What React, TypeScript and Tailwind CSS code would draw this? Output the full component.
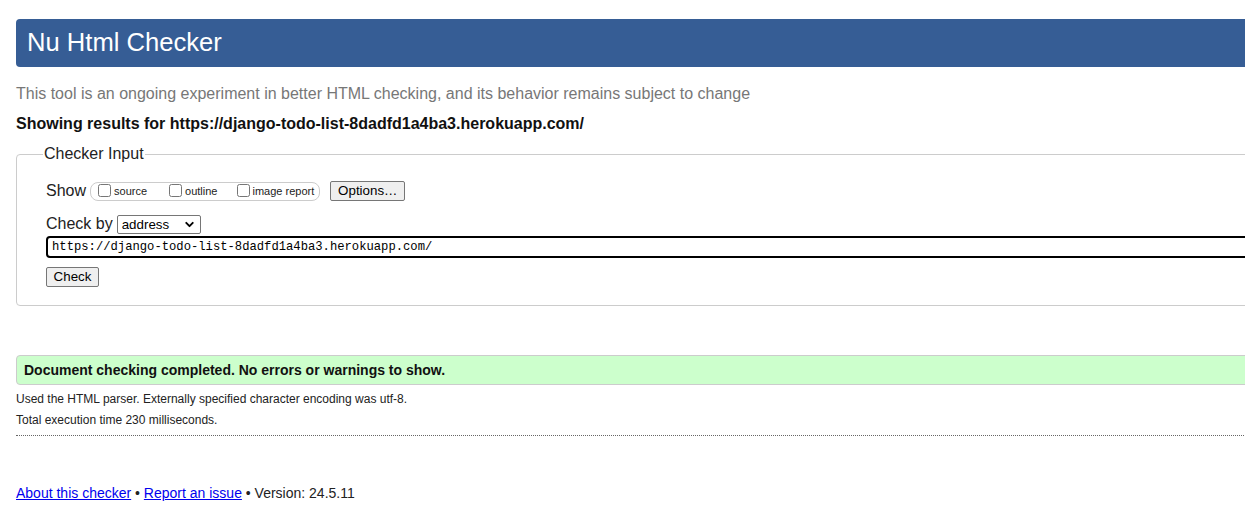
import { ChevronDown } from 'lucide-react';

const url = 'https://django-todo-list-8dadfd1a4ba3.herokuapp.com/';

function ShowOptions() {
  return (
    <span className="ml-[4px] flex h-[19px] items-center rounded-[8px] border border-[#cccccc] pl-[7px] pr-[5px] text-[11px] text-[#222]">
      <input type="checkbox" className="h-[13px] w-[13px] -translate-y-[1px]" />
      <span className="ml-[3px]">source</span>
      <input type="checkbox" className="ml-[22px] h-[13px] w-[13px] -translate-y-[1px]" />
      <span className="ml-[3px]">outline</span>
      <input type="checkbox" className="ml-[20px] h-[13px] w-[13px] -translate-y-[1px]" />
      <span className="ml-[2px]">image report</span>
    </span>
  );
}

function NativeButton({ label, className }: { label: string; className?: string }) {
  return (
    <button
      className={`h-[20px] rounded-[2px] border border-[#767676] bg-[#efefef] text-[13.33px] leading-[18px] text-black ${className ?? ''}`}
    >
      {label}
    </button>
  );
}

export default function App() {
  return (
    <div className="h-[518px] w-[1245px] overflow-hidden bg-white font-['Liberation_Sans',Arial,sans-serif] text-black">
      <div className="w-[1300px] pl-4 pt-[19px]">
        <h1 className="h-[48px] rounded-l-[4px] bg-[#365d95] pl-[11px] text-[25.6px] leading-[46px] text-white">
          Nu Html Checker
        </h1>

        <p className="mt-[17px] text-[16px] leading-[20px] text-[#777777]">
          This tool is an ongoing experiment in better HTML checking, and its behavior remains subject to change
        </p>
        <p className="mt-[10px] text-[16px] font-bold leading-[20px] text-[#111]">
          Showing results for {url}
        </p>

        <fieldset className="mt-[10px] rounded-[4px] border border-[#cccccc] pb-[17px] pl-[29px]">
          <legend className="-ml-[3px] px-[1px] text-[16px] leading-[20px] text-[#222]">Checker Input</legend>

          <div className="mt-[17px] flex h-[20px] items-center">
            <span className="text-[16px] leading-[20px] text-[#222]">Show</span>
            <ShowOptions />
            <NativeButton label="Options…" className="ml-[10px] w-[75px]" />
          </div>

          <div className="mt-[13px] flex h-[20px] items-center">
            <span className="text-[16px] leading-[20px] text-[#222]">Check by</span>
            <span className="relative ml-[4px] flex h-[19px] w-[84px] items-center rounded-[2px] border border-[#767676] bg-white pl-[4px] text-[13.33px] leading-[17px]">
              address
              <ChevronDown size={13} strokeWidth={3.5} className="absolute right-[4px] top-[2px]" />
            </span>
          </div>

          <div className="mt-[2px] flex h-[22px] items-center rounded-[4px] border-2 border-black pl-[4px] font-['Liberation_Mono','DejaVu_Sans_Mono',monospace] text-[12.2px]">
            {url}
          </div>

          <NativeButton label="Check" className="mt-[9px] w-[53px]" />
        </fieldset>

        <div className="mt-[49px] flex h-[30px] items-center rounded-l-[4px] border border-[#cccccc] bg-[#ccffcc] pl-[7px] text-[14px] font-bold text-[#111]">
          Document checking completed. No errors or warnings to show.
        </div>

        <p className="mt-[6px] text-[12px] leading-[16px] text-[#222]">
          Used the HTML parser. Externally specified character encoding was utf-8.
        </p>
        <p className="mt-[5px] text-[12px] leading-[16px] text-[#222]">Total execution time 230 milliseconds.</p>

        <div className="mt-[7px] border-t border-dotted border-[#666666]" />

        <p className="mt-[48px] text-[14px] leading-[18px] text-[#222]">
          <a href="#" className="text-[#0000ee] underline">About this checker</a>
          {' • '}
          <a href="#" className="text-[#0000ee] underline">Report an issue</a>
          {' • Version: 24.5.11'}
        </p>
      </div>
    </div>
  );
}
